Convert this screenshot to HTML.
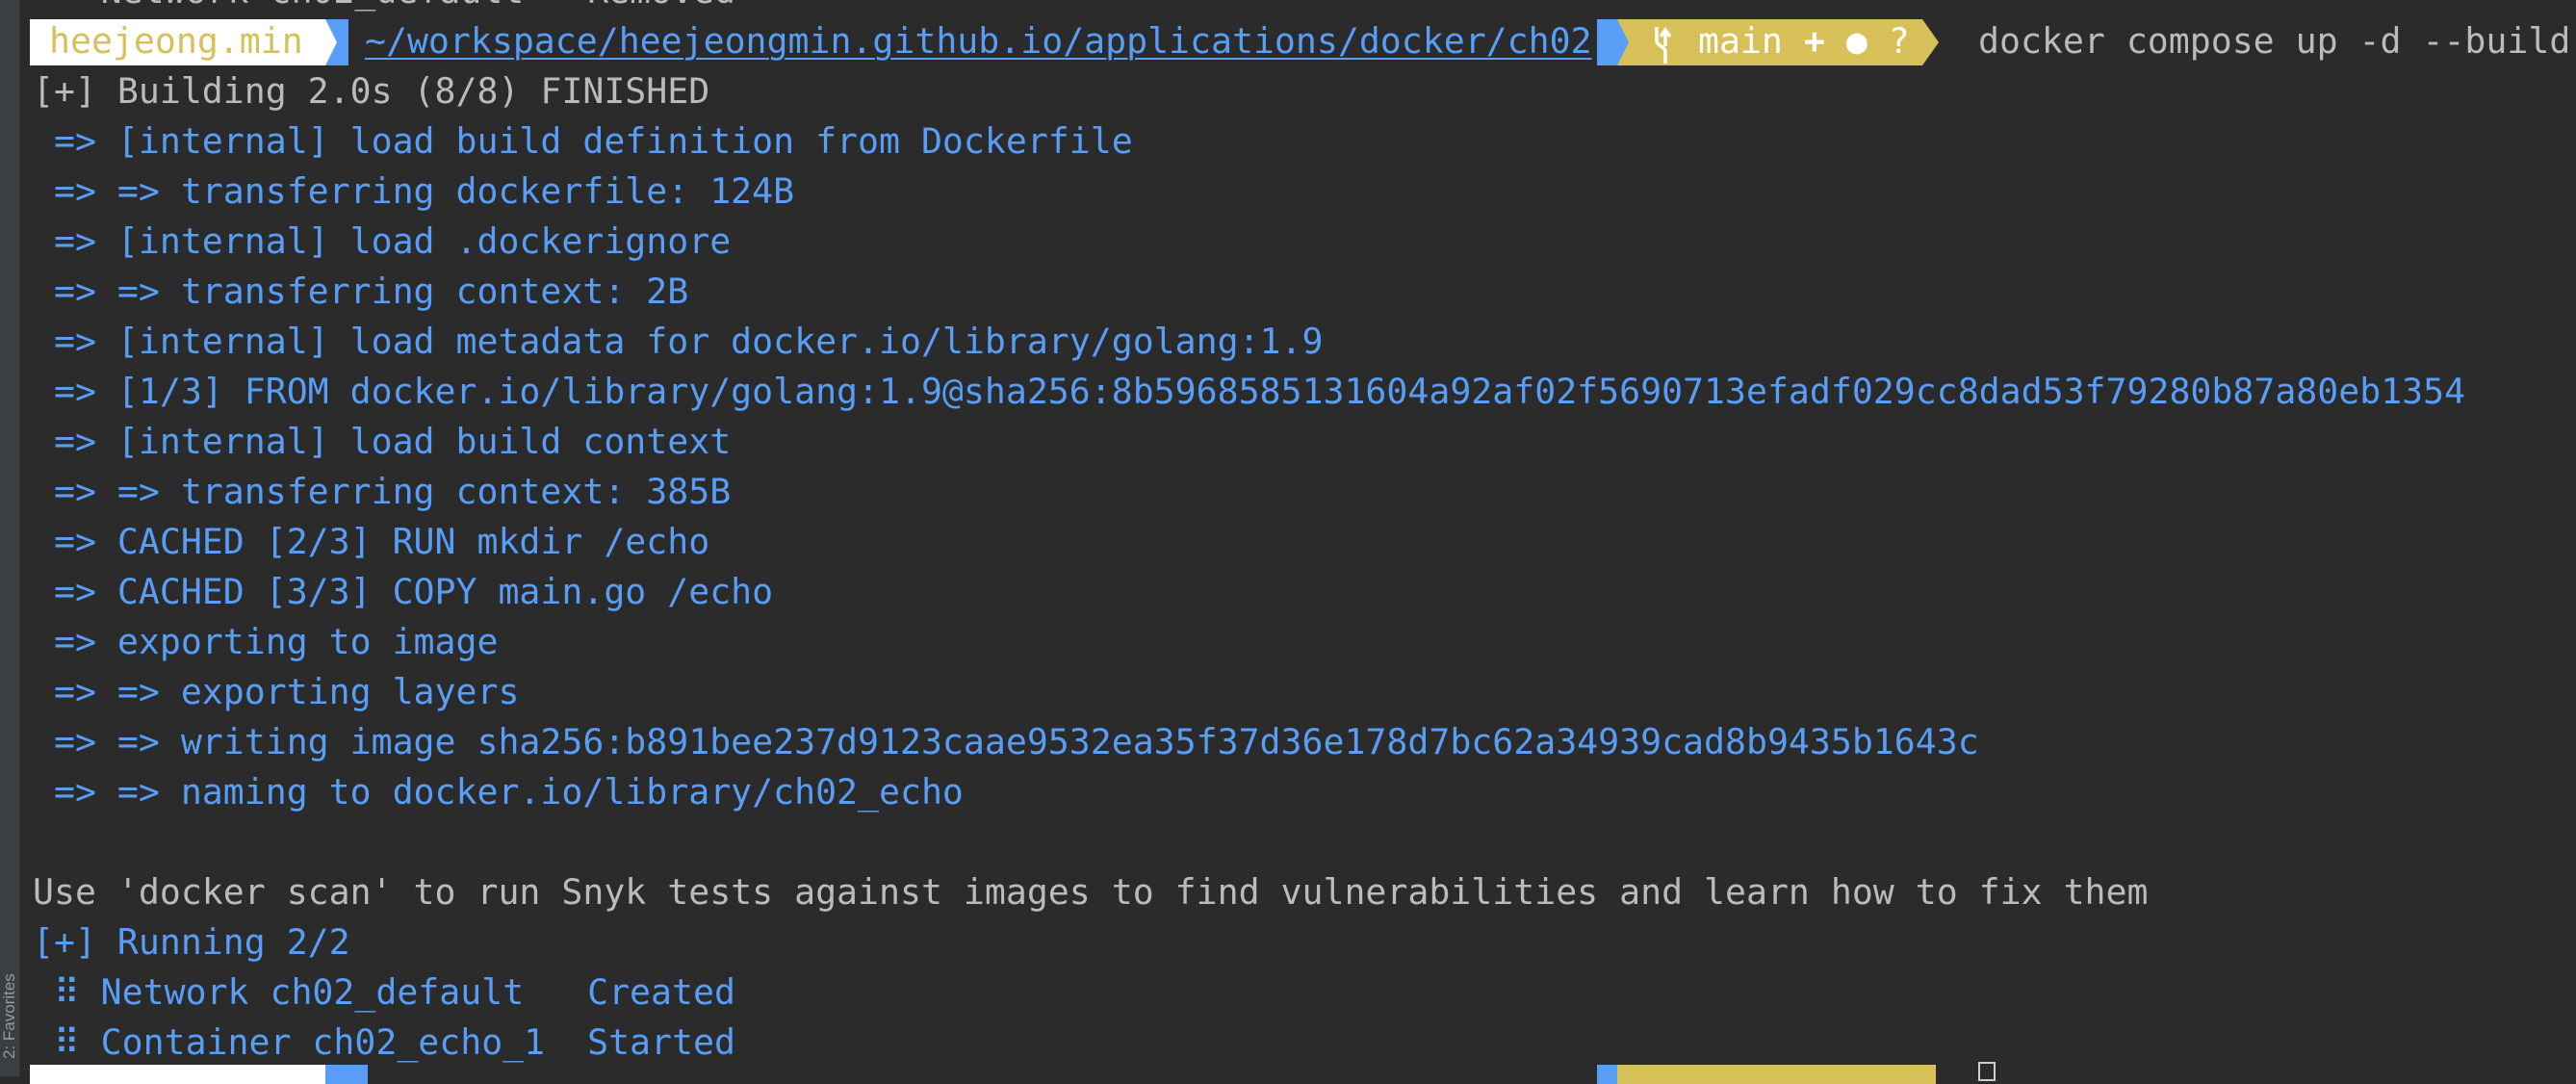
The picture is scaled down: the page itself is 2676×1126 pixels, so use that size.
<!DOCTYPE html>
<html><head><meta charset="utf-8"><style>
html,body{margin:0;padding:0;}
body{width:2676px;height:1118px;background:#2b2b2b;overflow:hidden;position:relative;font-family:"DejaVu Sans Mono","Liberation Mono",monospace;font-size:36.5px;}
.l{position:absolute;left:34px;white-space:pre;line-height:52px;height:52px;color:#589df6;}
.g{color:#bbbbbb;}
.gut{position:absolute;left:0;top:0;width:20px;height:1118px;background:#3c3f41;border-right:1px solid #323232;}
.fav{position:absolute;left:-40px;top:1040px;transform:rotate(-90deg);font-family:"Liberation Sans",sans-serif;font-size:17px;color:#999;white-space:nowrap;width:100px;}
.seg{position:absolute;}
</style></head><body>
<div class="gut"></div>
<div class="fav">2: Favorites</div>

<div class="l g" style="top:-35px"> ⠿ Network ch02_default   Removed</div>

<!-- prompt -->
<div class="seg" style="left:31px;top:20px;width:307px;height:48px;background:#fff"></div>
<div class="seg" style="left:51px;top:17px;line-height:52px;color:#d7c057;white-space:pre">heejeong.min</div>
<div class="seg" style="left:338px;top:20px;width:24px;height:48px;background:#589df6"></div>
<svg class="seg" style="left:338px;top:20px" width="24" height="48"><polygon points="0,0 12,24 0,48" fill="#fff"/></svg>
<div class="seg" style="left:379px;top:17px;line-height:52px;color:#589df6;white-space:pre;text-decoration:underline;text-decoration-thickness:2px;text-underline-offset:5px">~/workspace/heejeongmin.github.io/applications/docker/ch02</div>
<div class="seg" style="left:1659px;top:20px;width:338px;height:48px;background:#d7c057"></div>
<div class="seg" style="left:1659px;top:20px;width:21px;height:48px;background:#589df6"></div>
<svg class="seg" style="left:1680px;top:20px" width="14" height="48"><polygon points="0,0 12,24 0,48" fill="#589df6"/></svg>
<svg class="seg" style="left:1997px;top:20px" width="17" height="48"><polygon points="0,0 17,24 0,48" fill="#d7c057"/></svg>
<svg class="seg" style="left:1716px;top:28px" width="22" height="38"><path d="M5 0 V14 C5 20 14 20 14 26 V38 M14 20 V6 M9 10 L14 3 L19 10" stroke="#fff" stroke-width="3.5" fill="none"/></svg>
<div class="seg" style="left:1764px;top:17px;line-height:52px;color:#fff;white-space:pre">main <b>+</b> ● ?</div>
<div class="seg" style="left:2055px;top:17px;line-height:52px;color:#bbbbbb;white-space:pre">docker compose up -d --build</div>

<div class="l g" style="top:69px">[+] Building 2.0s (8/8) FINISHED</div>
<div class="l" style="top:121px"> => [internal] load build definition from Dockerfile</div>
<div class="l" style="top:173px"> => => transferring dockerfile: 124B</div>
<div class="l" style="top:225px"> => [internal] load .dockerignore</div>
<div class="l" style="top:277px"> => => transferring context: 2B</div>
<div class="l" style="top:329px"> => [internal] load metadata for docker.io/library/golang:1.9</div>
<div class="l" style="top:381px"> => [1/3] FROM docker.io/library/golang:1.9@sha256:8b5968585131604a92af02f5690713efadf029cc8dad53f79280b87a80eb1354</div>
<div class="l" style="top:433px"> => [internal] load build context</div>
<div class="l" style="top:485px"> => => transferring context: 385B</div>
<div class="l" style="top:537px"> => CACHED [2/3] RUN mkdir /echo</div>
<div class="l" style="top:589px"> => CACHED [3/3] COPY main.go /echo</div>
<div class="l" style="top:641px"> => exporting to image</div>
<div class="l" style="top:693px"> => => exporting layers</div>
<div class="l" style="top:745px"> => => writing image sha256:b891bee237d9123caae9532ea35f37d36e178d7bc62a34939cad8b9435b1643c</div>
<div class="l" style="top:797px"> => => naming to docker.io/library/ch02_echo</div>
<div class="l g" style="top:901px">Use 'docker scan' to run Snyk tests against images to find vulnerabilities and learn how to fix them</div>
<div class="l" style="top:953px">[+] Running 2/2</div>
<div class="l" style="top:1005px"> ⠿ Network ch02_default   Created</div>
<div class="l" style="top:1057px"> ⠿ Container ch02_echo_1  Started</div>

<!-- bottom prompt -->
<div class="seg" style="left:31px;top:1106px;width:307px;height:20px;background:#fff"></div>
<div class="seg" style="left:338px;top:1106px;width:44px;height:20px;background:#589df6"></div>
<div class="seg" style="left:1659px;top:1106px;width:21px;height:20px;background:#589df6"></div>
<div class="seg" style="left:1680px;top:1106px;width:331px;height:20px;background:#d7c057"></div>
<div class="seg" style="left:2055px;top:1103px;width:18px;height:20px;border:2px solid #ccc;box-sizing:border-box"></div>
</body></html>
